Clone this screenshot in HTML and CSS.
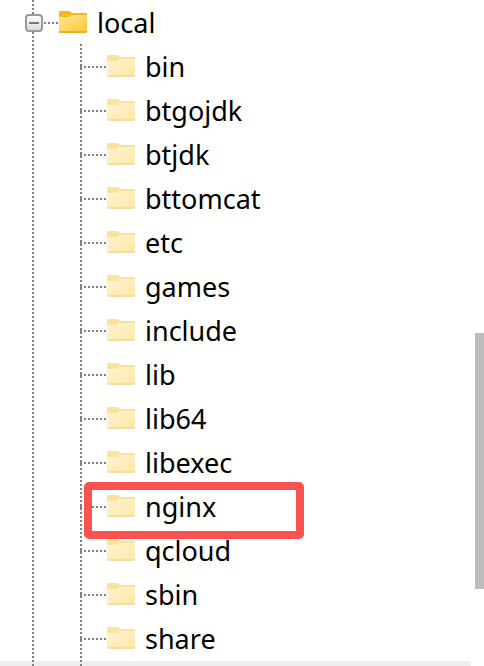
FILE: index.html
```html
<!DOCTYPE html>
<html lang="en">
<head>
<meta charset="utf-8">
<title>Directory tree</title>
<link rel="stylesheet" href="styles.css">
</head>
<body>
<svg class="defs" aria-hidden="true">
  <defs>
    <linearGradient id="paper" x1="0" y1="0" x2="1" y2="1">
      <stop offset="0" stop-color="#ffe594"/>
      <stop offset="1" stop-color="#ffc937"/>
    </linearGradient>
    <symbol id="folder" viewBox="0 0 28 22">
      <path d="M0 1Q0 0 1 0H10Q11 0 12 1L13 2H27Q28 2 28 3V8H0Z" fill="#f9b817"/>
      <path d="M0 6H9Q10 6 11 5L12 4H28V20H0Z" fill="url(#paper)"/>
      <path d="M0 20H28V21Q28 22 27 22H1Q0 22 0 21Z" fill="#ecae2e"/>
    </symbol>
  </defs>
</svg>
<div class="pane">
  <main class="content">
    <div class="tree">
      <div class="row root">
        <button class="toggle" type="button" aria-label="Collapse local" aria-expanded="true"></button>
        <span class="link"></span>
        <svg class="folder"><use href="#folder"/></svg>
        <span class="name">local</span>
      </div>
      <ul class="children">
        <li class="row"><svg class="folder"><use href="#folder"/></svg><span class="name">bin</span></li>
        <li class="row"><svg class="folder"><use href="#folder"/></svg><span class="name">btgojdk</span></li>
        <li class="row"><svg class="folder"><use href="#folder"/></svg><span class="name">btjdk</span></li>
        <li class="row"><svg class="folder"><use href="#folder"/></svg><span class="name">bttomcat</span></li>
        <li class="row"><svg class="folder"><use href="#folder"/></svg><span class="name">etc</span></li>
        <li class="row"><svg class="folder"><use href="#folder"/></svg><span class="name">games</span></li>
        <li class="row"><svg class="folder"><use href="#folder"/></svg><span class="name">include</span></li>
        <li class="row"><svg class="folder"><use href="#folder"/></svg><span class="name">lib</span></li>
        <li class="row"><svg class="folder"><use href="#folder"/></svg><span class="name">lib64</span></li>
        <li class="row"><svg class="folder"><use href="#folder"/></svg><span class="name">libexec</span></li>
        <li class="row marked"><svg class="folder"><use href="#folder"/></svg><span class="name">nginx</span></li>
        <li class="row"><svg class="folder"><use href="#folder"/></svg><span class="name">qcloud</span></li>
        <li class="row"><svg class="folder"><use href="#folder"/></svg><span class="name">sbin</span></li>
        <li class="row"><svg class="folder"><use href="#folder"/></svg><span class="name">share</span></li>
        <li class="next"></li>
      </ul>
    </div>
  </main>
  <div class="track"><div class="thumb"></div></div>
</div>
</body>
</html>
```

FILE: styles.css
```css
*, *::before, *::after { box-sizing: border-box; }

body {
  margin: 0;
  background: #fff;
  color: #000;
  font: 27px/44px "Noto Sans", "Open Sans", sans-serif;
}

.defs { position: absolute; width: 0; height: 0; }

.pane {
  display: flex;
  height: 100vh;
  overflow: hidden;
}

.content { flex: 1; overflow: hidden; }

.tree {
  position: relative;
  padding: 1px 0 0 25px;
}

/* Dotted guide lines */
.tree::before,
.children::before {
  content: "";
  position: absolute;
  top: 0;
  bottom: 0;
  width: 2px;
  background: repeating-linear-gradient(#808080 0 2px, transparent 2px 4px);
}

.tree::before { left: 32px; z-index: 1; }

.children::before { left: 55px; top: -1px; }

.row {
  position: relative;
  display: flex;
  align-items: center;
  height: 44px;
}

.toggle {
  position: relative;
  z-index: 2;
  width: 18px;
  height: 18px;
  padding: 0;
  border: 2px solid #999;
  border-radius: 4px;
  background: linear-gradient(#777, #777) center / 10px 2px no-repeat, linear-gradient(#fff, #ddd);
}

.link {
  width: 14px;
  height: 2px;
  margin: 0 1px;
  background: repeating-linear-gradient(90deg, #808080 0 2px, transparent 2px 4px);
}

.folder {
  flex: none;
  width: 28px;
  height: 22px;
  margin-bottom: 2px;
}

.name { margin-left: 10px; }

.children {
  position: relative;
  margin: 0;
  padding: 0;
  list-style: none;
}

.children .row { padding-left: 82px; }

.children .row::before {
  content: "";
  position: absolute;
  left: 55px;
  top: 19px;
  width: 2px;
  height: 6px;
  background: #808080;
}

.children .row::after {
  content: "";
  position: absolute;
  left: 59px;
  top: 21px;
  width: 22px;
  height: 2px;
  background: repeating-linear-gradient(90deg, #808080 0 2px, transparent 2px 4px);
}

.children .folder { opacity: 0.42; }

.next {
  height: 44px;
  margin-left: -25px;
  background: #eee;
}

.marked .name::after {
  content: "";
  position: absolute;
  z-index: 1;
  left: 59px;
  top: -3px;
  width: 220px;
  height: 57px;
  border: 8px solid #fa5151;
  border-radius: 5px;
}

.track {
  display: flex;
  flex-direction: column;
  width: 13px;
  padding-left: 4px;
}

.track::before { content: ""; flex: 333; }
.thumb { flex: 256; background: #bdbdbd; }
.track::after { content: ""; flex: 77; }
```
